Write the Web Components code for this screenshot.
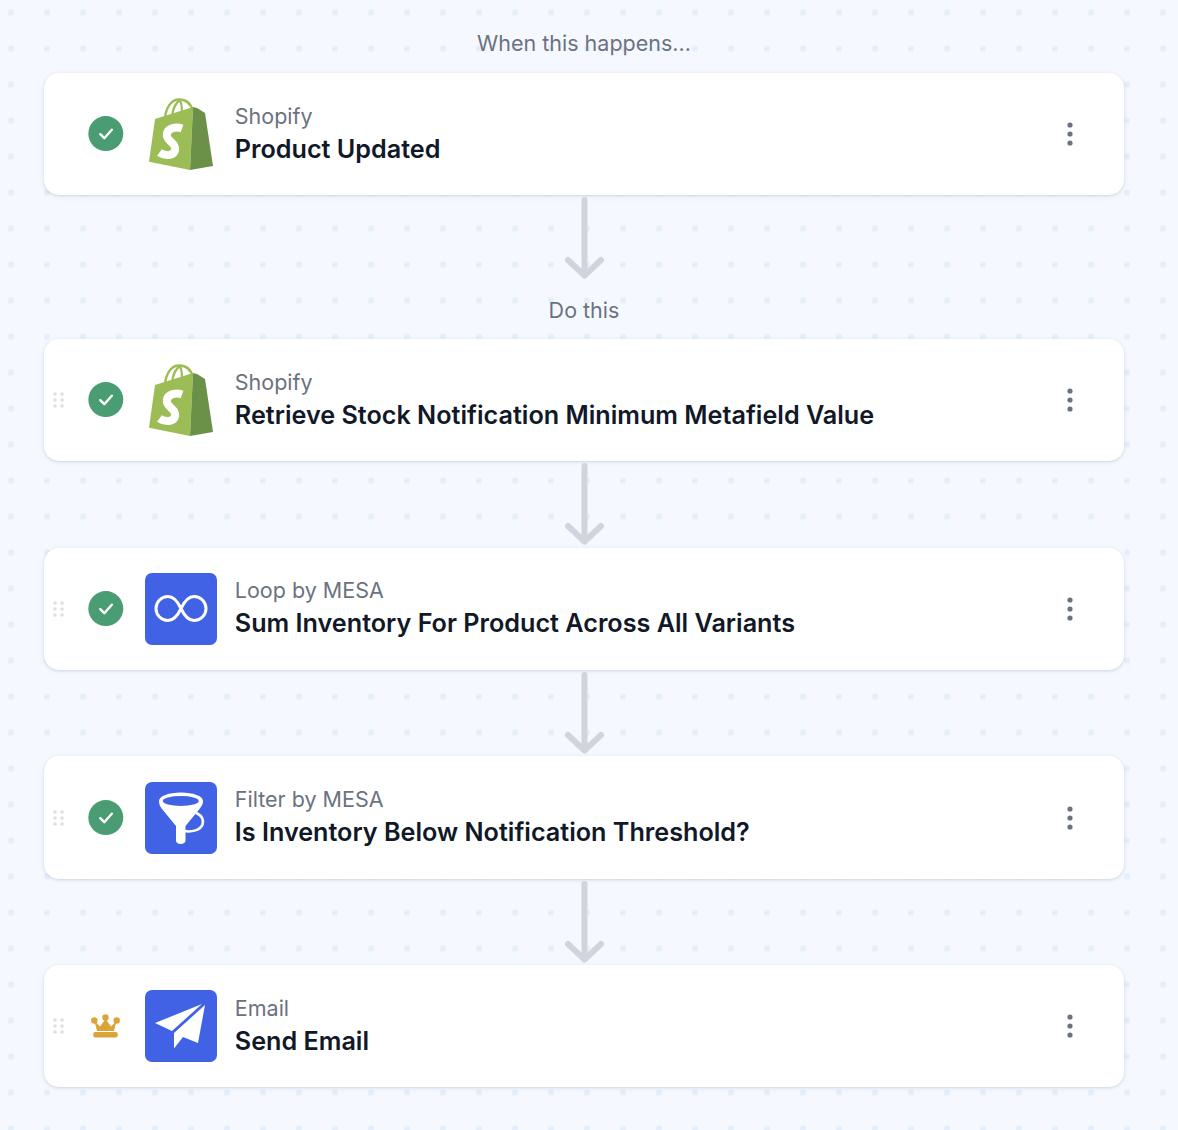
<!DOCTYPE html>
<html lang="en">
<head>
<meta charset="utf-8">
<title>Workflow</title>
<style>
    html, body { margin: 0; padding: 0; }
    body { font-family: Inter, 'Noto Sans', sans-serif; }
</style>
</head>
<body>
<flow-canvas>
    <flow-label first>When this happens...</flow-label>
    <flow-step status="done">
        <app-logo slot="logo" name="shopify"></app-logo>
        <span slot="app">Shopify</span>
        <span slot="title">Product Updated</span>
    </flow-step>
    <flow-arrow></flow-arrow>
    <flow-label>Do this</flow-label>
    <flow-step status="done" draggable-step>
        <app-logo slot="logo" name="shopify"></app-logo>
        <span slot="app">Shopify</span>
        <span slot="title">Retrieve Stock Notification Minimum Metafield Value</span>
    </flow-step>
    <flow-arrow></flow-arrow>
    <flow-step status="done" draggable-step>
        <app-logo slot="logo" name="loop"></app-logo>
        <span slot="app">Loop by MESA</span>
        <span slot="title">Sum Inventory For Product Across All Variants</span>
    </flow-step>
    <flow-arrow></flow-arrow>
    <flow-step status="done" draggable-step>
        <app-logo slot="logo" name="filter"></app-logo>
        <span slot="app">Filter by MESA</span>
        <span slot="title">Is Inventory Below Notification Threshold?</span>
    </flow-step>
    <flow-arrow></flow-arrow>
    <flow-step status="premium" draggable-step>
        <app-logo slot="logo" name="email"></app-logo>
        <span slot="app">Email</span>
        <span slot="title">Send Email</span>
    </flow-step>
</flow-canvas>

<script>
const LOGOS = {
    shopify: `
        <svg width="64" height="73" viewBox="0 0 64 73" style="margin:-.5px 4px 0">
            <path d="M16 20C17 10 22 2 29 1.500C37 1 42 6 44 13" fill="none" stroke="#9cbd56" stroke-width="2.400"/>
            <path d="M23 18C24 11 27 4 31 2.500M33 15C33 10 33 6 31 2.500" fill="none" stroke="#9cbd56" stroke-width="2.200"/>
            <path d="M0 63.700 6 21 44 9 41 72Z" fill="#9cbd56"/>
            <path d="M44 9 48 10 56 15 64 68 41 72Z" fill="#6b9149"/>
            <path d="M33 30.500C27.500 28.500 18.500 29.500 17.800 36.500C17 43 27 44.500 26.200 51.500C25.400 58 16 58.500 10.500 54.500" fill="none" stroke="#fff" stroke-width="8"/>
        </svg>`,
    loop: `
        <svg width="72" height="72" viewBox="0 0 72 72">
            <rect width="72" height="72" rx="7" fill="#4162e5"/>
            <path d="M36 35.500C32 27 28 23.500 23 23.500A12 12 0 0 0 23 47.500C28 47.500 32 44 36 35.500C40 27 44 23.500 49 23.500A12 12 0 0 1 49 47.500C44 47.500 40 44 36 35.500Z" fill="none" stroke="#fff" stroke-width="3"/>
        </svg>`,
    filter: `
        <svg width="72" height="72" viewBox="0 0 72 72">
            <rect width="72" height="72" rx="7" fill="#4162e5"/>
            <path d="M51 31C57 33 59 38 57.500 42.500C55.500 48 47 50.500 39 49" fill="none" stroke="#fff" stroke-width="2.600"/>
            <path d="M14 19C14 14 24 10.500 36 10.500C48 10.500 58 14 58 19C58 22 56.500 24.500 54.500 27L40.500 44V58.500C40.500 60.500 38.500 62 35.500 62C33 62 31 60.500 31 58.500V44L17 27C15 24.500 14 22 14 19Z" fill="#fff"/>
            <ellipse cx="35.800" cy="19" rx="18" ry="5" fill="#4162e5"/>
        </svg>`,
    email: `
        <svg width="72" height="72" viewBox="0 0 72 72">
            <rect width="72" height="72" rx="7" fill="#4162e5"/>
            <path d="M57 14 10 33 27 41Z" fill="#fff"/>
            <path d="M60 15 29 43V58.500L38 47 53 53Z" fill="#fff"/>
        </svg>`,
};

class AppLogo extends HTMLElement {
    constructor() {
        super();
        this.attachShadow({ mode: 'open' });
        this.shadowRoot.innerHTML = `
            <style>
                :host { display: block; width: 72px; height: 72px; }
                div { display: flex; justify-content: center; }
                svg { display: block; flex: none; }
            </style>
            <div>${LOGOS[this.getAttribute('name')] || ''}</div>
        `;
    }
}

const canvasTemplate = document.createElement('template');
canvasTemplate.innerHTML = `
<style>
    :host {
        display: flex;
        flex-direction: column;
        box-sizing: border-box;
        width: 100%;
        height: 1130px;
        padding: 28px 54px 0 44px;
        overflow: hidden;
        background-color: #f5f9ff;
        background-image: radial-gradient(circle, #e5effc 2.900px, transparent 3.400px);
        background-size: 36px 36px;
        background-position: -7px -5.500px;
    }
</style>
<slot></slot>
`;

class FlowCanvas extends HTMLElement {
    constructor() {
        super();
        this.attachShadow({ mode: 'open' });
        this.shadowRoot.appendChild(canvasTemplate.content.cloneNode(true));
    }
}

const labelTemplate = document.createElement('template');
labelTemplate.innerHTML = `
<style>
    :host {
        display: block;
        height: 30px;
        margin: 13.330px 0 14px;
        font-size: 21.500px;
        line-height: 30px;
        text-align: center;
        color: #6b7280;
    }
    :host([first]) { margin: 0 0 15px; }
</style>
<slot></slot>
`;

class FlowLabel extends HTMLElement {
    constructor() {
        super();
        this.attachShadow({ mode: 'open' });
        this.shadowRoot.appendChild(labelTemplate.content.cloneNode(true));
    }
}

const arrowTemplate = document.createElement('template');
arrowTemplate.innerHTML = `
<style>
    :host { display: block; height: 86.300px; }
    svg { display: block; margin: 0 auto; }
</style>
<svg width="44" height="86" viewBox="0 0 44 86" fill="none" stroke="#d1d5db" stroke-width="6" stroke-linecap="round" stroke-linejoin="round">
    <path d="M22.500 5V80"/>
    <path d="M6 65 22.500 80.500 39 65"/>
</svg>
`;

class FlowArrow extends HTMLElement {
    constructor() {
        super();
        this.attachShadow({ mode: 'open' });
        this.shadowRoot.appendChild(arrowTemplate.content.cloneNode(true));
    }
}

const stepTemplate = document.createElement('template');
stepTemplate.innerHTML = `
<style>
    :host {
        display: grid;
        grid-template-columns: 101px 72px 1fr 24px;
        align-items: center;
        box-sizing: border-box;
        height: 122.400px;
        padding-right: 42px;
        background: #fff;
        border-radius: 15px;
        box-shadow: 0 1px 4px rgba(60, 72, 100, .16), 0 1px 2px rgba(60, 72, 100, .06);
    }
    .lead { display: flex; align-items: center; height: 36px; }
    .grip { width: 44px; flex: none; display: flex; justify-content: flex-end; }
    .grip svg { margin-right: 23px; visibility: hidden; }
    :host([draggable-step]) .grip svg { visibility: visible; }
    .text { padding: 0 0 1px 17.800px; min-width: 0; }
    .app {
        font-size: 21.500px;
        line-height: 30px;
        color: #6b7280;
    }
    .title {
        font-size: 25.180px;
        line-height: 36px;
        font-weight: 600;
        color: #111827;
    }
    .menu { display: block; }
</style>
<div class="lead">
    <div class="grip">
        <svg width="12" height="16" viewBox="0 0 12 16" fill="#dcdfe5">
            <circle cx="2" cy="2" r="1.800"/><circle cx="9" cy="2" r="1.800"/>
            <circle cx="2" cy="8" r="1.800"/><circle cx="9" cy="8" r="1.800"/>
            <circle cx="2" cy="14" r="1.800"/><circle cx="9" cy="14" r="1.800"/>
        </svg>
    </div>
    <span id="status"></span>
</div>
<slot name="logo"></slot>
<div class="text">
    <div class="app"><slot name="app"></slot></div>
    <div class="title"><slot name="title"></slot></div>
</div>
<svg class="menu" width="24" height="28" viewBox="0 0 24 28" fill="#6b7280">
    <circle cx="12" cy="5" r="2.600"/><circle cx="12" cy="14" r="2.600"/><circle cx="12" cy="23" r="2.600"/>
</svg>
`;

const STATUS_ICONS = {
    done: `
        <svg width="36" height="36" viewBox="0 0 36 36" style="display:block">
            <circle cx="17.800" cy="17.600" r="17.500" fill="#4a9d72"/>
            <path d="M12.300 18.200 16.300 22.200 23.800 13.700" fill="none" stroke="#fff" stroke-width="2.400" stroke-linecap="round" stroke-linejoin="round"/>
        </svg>`,
    premium: `
        <svg width="36" height="24" viewBox="0 0 36 24" style="display:block">
            <g fill="#dca437">
                <circle cx="6.300" cy="6.500" r="3.200"/><circle cx="17.500" cy="3.500" r="3.200"/><circle cx="28.700" cy="6.500" r="3.200"/>
                <path d="M6.500 7 12 12.500 17.500 5 23 12.500 28.500 7 26 17H9Z"/>
                <rect x="5.300" y="18" width="24.400" height="5.500" rx="1.800"/>
            </g>
        </svg>`,
};

class FlowStep extends HTMLElement {
    constructor() {
        super();
        this.attachShadow({ mode: 'open' });
        this.shadowRoot.appendChild(stepTemplate.content.cloneNode(true));
        this.shadowRoot.getElementById('status').innerHTML =
            STATUS_ICONS[this.getAttribute('status')] || '';
    }
}

customElements.define('app-logo', AppLogo);
customElements.define('flow-canvas', FlowCanvas);
customElements.define('flow-label', FlowLabel);
customElements.define('flow-arrow', FlowArrow);
customElements.define('flow-step', FlowStep);
</script>
</body>
</html>
